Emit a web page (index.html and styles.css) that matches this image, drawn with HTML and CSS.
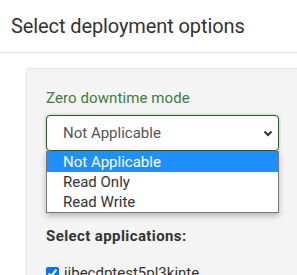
FILE: index.html
```html
<!DOCTYPE html>
<html lang="en">
<head>
  <meta charset="UTF-8" />
  <meta name="viewport" content="width=device-width, initial-scale=1.0"/>
  <title>Select deployment options</title>
  <link rel="stylesheet" href="styles.css">
</head>
<body>

  <header class="dialog-header">
    <h1>Select deployment options</h1>
  </header>

  <main class="dialog-body">
    <section class="options-panel">
      <label class="field-label">Zero downtime mode</label>

      <div class="select-wrap">
        <div class="select-box">
          <span>Not Applicable</span>
          <svg class="chevron" width="10" height="7" viewBox="0 0 10 7">
            <path d="M1.5 1.5 L5 5 L8.5 1.5" fill="none" stroke="#333" stroke-width="2"/>
          </svg>
        </div>

        <!-- open dropdown list -->
        <ul class="select-list">
          <li class="active">Not Applicable</li>
          <li>Read Only</li>
          <li>Read Write</li>
        </ul>
      </div>

      <h2 class="apps-title">Select applications:</h2>

      <label class="app-row">
        <input type="checkbox" checked />
        <span>jibecdptest5pl3kinte</span>
      </label>
    </section>
  </main>

</body>
</html>
```

FILE: styles.css
```css
body {
  font-family: Roboto, "Liberation Sans", sans-serif;
  margin: 0;
  color: #333;
  background: #fff;
  overflow: hidden;
}

.dialog-header {
  height: 52px;
  padding: 0 11px;
  border-bottom: 1px solid #e4e4e4;
  display: flex;
  align-items: center;
}

.dialog-header h1 {
  margin: 0;
  font-size: 20px;
  font-weight: 400;
  letter-spacing: -0.1px;
  color: #333;
}

.dialog-body {
  padding: 15px 0 0 26px;
}

.options-panel {
  background: #f4f4f4;
  border: 1px solid #e6e6e6;
  border-right: none;
  border-radius: 4px 0 0 0;
  padding: 19px 18px 20px 19px;
  box-shadow: -1px 0 2px rgba(0,0,0,0.04);
}

.field-label {
  display: block;
  font-size: 15px;
  line-height: 20px;
  letter-spacing: 0.1px;
  color: #3d7d3d;
}

.select-wrap {
  position: relative;
  margin-top: 7px;
}

.select-box {
  height: 34px;
  border: 1px solid #2e5e2e;
  border-radius: 4px;
  background: #fff;
  box-shadow: 0 0 3px rgba(70, 150, 70, 0.55);
  display: flex;
  align-items: center;
  justify-content: space-between;
  padding: 0 5px 0 16px;
  font-size: 15px;
  color: #555;
}

.select-list {
  position: absolute;
  top: 36px;
  left: 0;
  right: 0;
  margin: 0;
  padding: 0;
  list-style: none;
  background: #fff;
  border: 1px solid #767676;
  box-shadow: 0 3px 6px rgba(0,0,0,0.25);
  z-index: 10;
}

.select-list li {
  height: 20px;
  line-height: 20px;
  padding-left: 16px;
  font-size: 15px;
  color: #333;
}

.select-list li.active {
  background: #1e90ff;
  color: #fff;
}

.apps-title {
  margin: 75px 0 0;
  font-size: 15px;
  line-height: 20px;
  font-weight: 700;
  letter-spacing: 0.4px;
  color: #333;
}

.app-row {
  display: flex;
  align-items: center;
  gap: 5px;
  margin-top: 18px;
  font-size: 15px;
}

.app-row input {
  margin: 0;
  width: 13px;
  height: 13px;
}
```
